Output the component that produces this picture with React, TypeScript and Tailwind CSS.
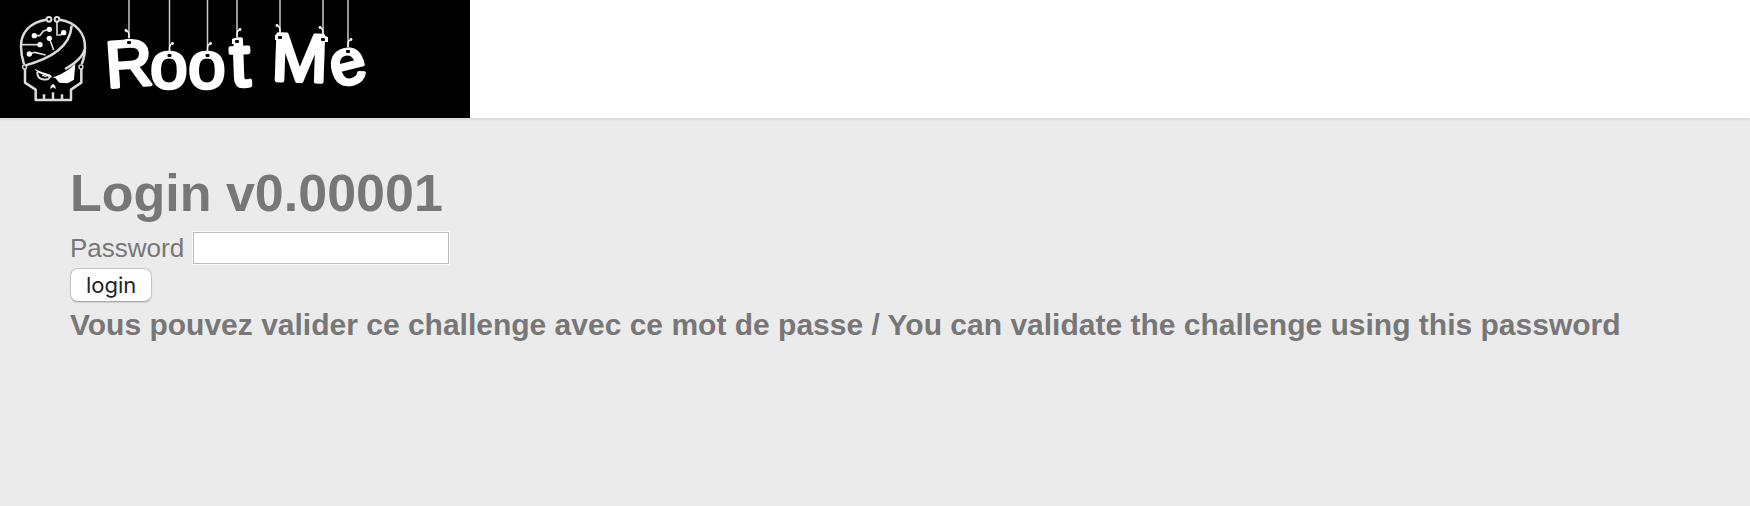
type Tag = {
  char: string;
  x: number;
  y: number;
  size: number;
  angle: number;
  stringX: number;
  top: number;
  side: 1 | -1;
  stroke: number;
};

const tags: Tag[] = [
  { char: "R", x: 129, y: 86, size: 65, angle: -4, stringX: 129, top: 38, side: -1, stroke: 3.5 },
  { char: "o", x: 169, y: 88, size: 67, angle: 0, stringX: 169.5, top: 51, side: 1, stroke: 3.5 },
  { char: "o", x: 207, y: 88, size: 67, angle: 0, stringX: 207.5, top: 51, side: 1, stroke: 3.5 },
  { char: "t", x: 240, y: 86, size: 72, angle: -2, stringX: 237, top: 37, side: 1, stroke: 4 },
  { char: "M", x: 300, y: 81, size: 67, angle: 2, stringX: 280, top: 33, side: -1, stroke: 4 },
  { char: "e", x: 347, y: 84, size: 64, angle: -14, stringX: 348, top: 47, side: 1, stroke: 3.5 },
];

function HangingString({ x, top, side }: { x: number; top: number; side: 1 | -1 }) {
  return (
    <g>
      <path d={`M${x} 0V${top}`} stroke="#c8c8c8" strokeWidth="1.5" />
      <path
        d={`M${x} ${top}v-3q0 -3 ${side * 2} -4`}
        stroke="#fff"
        strokeWidth="1.4"
        fill="none"
      />
      <circle cx={x + side * 3} cy={top - 7.5} r="1.4" fill="#fff" />
      <path d={`M${x - 5} ${top + 7}v-5q5 -2.5 10 0v5z`} fill="#fff" />
      <rect x={x - 2} y={top + 3} width="4" height="3" rx="1" fill="#000" />
    </g>
  );
}

function Skull() {
  return (
    <g transform="scale(0.3333)" stroke="#dcdcdc" strokeWidth="7.5" fill="none" strokeLinejoin="round">
      <path d="M139 59C91 66 62 98 63 139C63 160 67 178 72 193" />
      <path d="M179 59C226 66 256 99 255 142C255 162 251 179 245 193" />
      <circle cx="147" cy="58" r="7" strokeWidth="6" />
      <circle cx="171" cy="58" r="7" strokeWidth="6" />
      <path d="M215 77C211 139 157 174 74 197" />
      <path d="M253 149C249 170 230 187 195 207" />
      <circle cx="74" cy="201" r="6" strokeWidth="4" />
      <circle cx="243" cy="201" r="6" strokeWidth="4" />
      <path d="M75 207V248L107 269V300H213V269L244 248V207" />
      <path d="M132 299V283M159 299V277M186 299V283" />
      <g strokeWidth="5">
        <path d="M171 65V105H181L191 98" />
        <path d="M103 107H119L130 93L148 88" />
        <path d="M66 134H120" />
        <path d="M148 115L161 150" />
        <path d="M88 162L104 157L137 165" />
      </g>
      <g fill="#fff" stroke="none">
        <circle cx="103" cy="107" r="8" />
        <circle cx="148" cy="88" r="8" />
        <circle cx="191" cy="98" r="8" />
        <circle cx="120" cy="134" r="8" />
        <circle cx="148" cy="115" r="8" />
        <circle cx="88" cy="162" r="8" />
        <path d="M158 232C180 226 205 211 226 191L222 239L203 250L178 248L166 234Z" />
        <path d="M104 206C119 215 137 218 151 224L157 232L149 232C130 222 112 221 104 206Z" />
        <path d="M159 251Q150 257 150 267L159 262L168 267Q168 257 159 251Z" />
      </g>
      <path d="M112 216C112 237 127 242 145 237L151 229" strokeWidth="6" />
      <path d="M126 226L140 230" strokeWidth="4" />
    </g>
  );
}

function Logo() {
  return (
    <svg viewBox="0 0 470 118" className="block w-[470px] max-w-full bg-black" role="img" aria-label="Root Me">
      <Skull />
      {tags.map((t, i) => (
        <text
          key={i}
          x={t.x}
          y={t.y}
          textAnchor="middle"
          transform={`rotate(${t.angle} ${t.x} ${t.y - 22})`}
          fontSize={t.size}
          fill="#fff"
          stroke="#fff"
          strokeWidth={t.stroke}
          strokeLinejoin="round"
          className="font-['Liberation_Sans',Arial,sans-serif]"
        >
          {t.char}
        </text>
      ))}
      {tags.map((t, i) => (
        <HangingString key={i} x={t.stringX} top={t.top} side={t.side} />
      ))}
      <HangingString x={323} top={35} side={-1} />
    </svg>
  );
}

export default function App() {
  return (
    <div className="flex min-h-screen flex-col bg-[#ebebeb] font-['Liberation_Sans',Arial,sans-serif] text-[#777]">
      <header className="bg-white shadow-[0_1px_4px_rgba(0,0,0,0.12)]">
        <a href="#" className="block w-fit">
          <Logo />
        </a>
      </header>
      <main className="px-[70px] pt-[45px]">
        <h1 className="text-[52px] leading-[60px] font-bold">Login v0.00001</h1>
        <form className="mt-[9px]" onSubmit={(e) => e.preventDefault()}>
          <div className="flex items-center gap-[9px]">
            <label htmlFor="password" className="text-[26px] leading-8">
              Password
            </label>
            <input
              id="password"
              type="password"
              className="h-8 w-64 border border-[#bbb] bg-white px-1 text-[22px] text-black outline-1 outline-white/70"
            />
          </div>
          <button
            type="submit"
            className="mt-1 block h-[34px] rounded-lg border border-[#c4c4c4] border-b-[#aaa] bg-white px-[15px] font-['Inter',sans-serif] text-[22px] leading-8 text-[#222] shadow-[0_1px_1px_rgba(0,0,0,0.12)]"
          >
            login
          </button>
        </form>
        <h2 className="mt-[7px] text-[30px] leading-8 font-bold">
          Vous pouvez valider ce challenge avec ce mot de passe / You can validate the challenge using this password
        </h2>
      </main>
    </div>
  );
}
